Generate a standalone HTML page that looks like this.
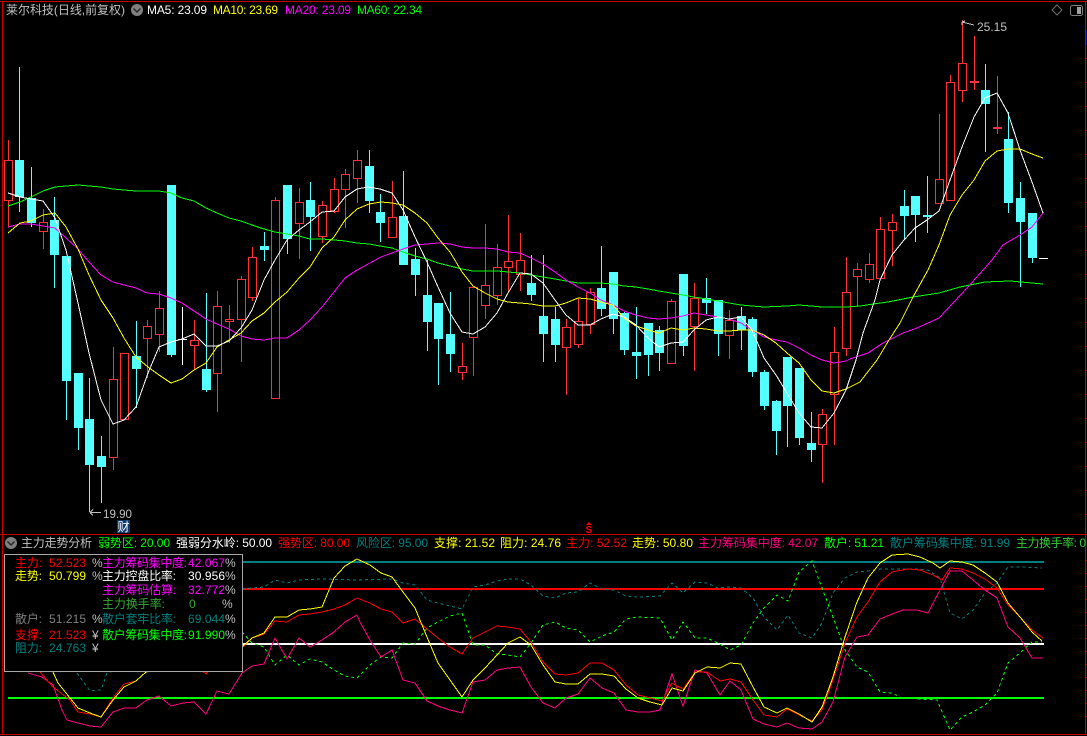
<!DOCTYPE html>
<html lang="zh">
<head>
<meta charset="utf-8">
<title>莱尔科技</title>
<style>
html,body{margin:0;padding:0;background:#000;width:1087px;height:736px;overflow:hidden}
svg{display:block;position:absolute;left:0;top:0}
text{font-family:"Liberation Sans","WenQuanYi Zen Hei","Noto Sans CJK SC",sans-serif;font-size:12px;white-space:pre}
.l{shape-rendering:crispEdges;fill:none;stroke-width:1}
</style>
</head>
<body>
<svg width="1087" height="736" viewBox="0 0 1087 736" xmlns="http://www.w3.org/2000/svg">
<rect width="1087" height="736" fill="#000"/>
<!-- frame -->
<g shape-rendering="crispEdges" fill="#c40000">
<rect x="0" y="1" width="1087" height="1"/>
<rect x="2" y="1" width="1" height="734"/>
<rect x="1085" y="1" width="1" height="734"/>
<rect x="0" y="534" width="1087" height="1"/>
<rect x="0" y="734" width="1087" height="1"/>
<rect x="1086" y="30" width="1" height="15" fill="#0000a8"/>
</g>
<path class="l" stroke="#c40000" d="M1086 58.5h1M1086 82.5h1M1086 106.5h1M1086 130.5h1M1086 154.5h1M1086 178.5h1M1086 202.5h1M1086 226.5h1M1086 250.5h1M1086 274.5h1M1086 298.5h1M1086 322.5h1M1086 346.5h1M1086 370.5h1M1086 394.5h1M1086 418.5h1M1086 442.5h1M1086 466.5h1M1086 490.5h1M1086 514.5h1M1086 560.5h1M1086 573.5h1M1086 586.5h1M1086 599.5h1M1086 612.5h1M1086 625.5h1M1086 638.5h1M1086 651.5h1M1086 664.5h1M1086 677.5h1M1086 690.5h1M1086 703.5h1M1086 716.5h1"/>

<!-- cyan wicks -->
<path class="l" stroke="#54ffff" d="M19.5 67V212M31.5 167V227M54.5 197V288M66.5 256V420M78.5 373V450M89.5 378V512M101.5 436V503M136.5 321V408M171.5 185V357M206.5 293V392M264.5 232V261M287.5 185V254M310.5 182V251M369.5 150V213M380.5 194V242M403.5 171V265M415.5 248V296M427.5 260V351M438.5 303V385M450.5 292V372M531.5 255V301M543.5 255V362M555.5 307V362M601.5 246V316M613.5 272V334M624.5 312V355M636.5 307V379M648.5 323V376M659.5 326V371M683.5 274V356M706.5 278V314M718.5 300V356M741.5 307V350M752.5 317V377M764.5 370V410M776.5 400V455M787.5 357V447M799.5 368V445M811.5 412V462M904.5 190V240M915.5 196V242M927.5 176V233M985.5 64V152M1008.5 112V213M1020.5 182V287M1032.5 213V263"/>
<!-- cyan bodies -->
<path shape-rendering="crispEdges" fill="#54ffff" d="M15 160h9v37h-9zM27 198h9v25h-9zM50 220h9v35h-9zM62 256h9v125h-9zM74 373h9v55h-9zM85 419h9v46h-9zM97 456h9v11h-9zM132 356h9v13h-9zM167 185h9v170h-9zM202 369h9v21h-9zM260 246h9v4h-9zM283 185h9v54h-9zM306 200h9v17h-9zM365 166h9v35h-9zM376 212h9v11h-9zM399 216h9v49h-9zM411 259h9v16h-9zM423 295h9v27h-9zM434 303h9v36h-9zM446 334h9v20h-9zM527 283h9v12h-9zM539 316h9v18h-9zM551 319h9v26h-9zM597 288h9v21h-9zM609 272h9v47h-9zM620 313h9v37h-9zM632 352h9v4h-9zM644 323h9v32h-9zM655 330h9v23h-9zM679 274h9v72h-9zM702 298h9v5h-9zM714 300h9v34h-9zM737 316h9v14h-9zM748 319h9v53h-9zM760 372h9v34h-9zM772 401h9v30h-9zM783 357h9v49h-9zM795 368h9v70h-9zM807 443h9v7h-9zM900 206h9v10h-9zM911 196h9v19h-9zM923 215h9v2h-9zM981 90h9v14h-9zM1004 139h9v64h-9zM1016 198h9v24h-9zM1028 213h9v45h-9z"/>
<!-- red wicks -->
<path class="l" stroke="#ff3232" d="M8.5 140V160M8.5 201V227M43.5 209V222M43.5 231V249M113.5 347V379M113.5 457V470M147.5 320V326M147.5 338V378M159.5 291V308M159.5 334V352M194.5 320V340M194.5 345V370M217.5 291V306M217.5 373V412M229.5 305V319M229.5 321V343M241.5 276V279M241.5 319V362M252.5 247V257M252.5 297V301M275.5 197V200M299.5 188V202M299.5 223V259M322.5 201V205M322.5 236V243M334.5 178V189M334.5 211V213M345.5 169V174M345.5 189V228M357.5 150V160M357.5 178V203M392.5 181V217M462.5 343V366M462.5 372V380M473.5 337V376M485.5 224V285M485.5 305V319M497.5 244V267M497.5 295V305M508.5 215V261M508.5 267V292M520.5 233V260M520.5 274V291M566.5 319V327M566.5 347V395M578.5 298V321M578.5 344V348M590.5 288V292M590.5 324V334M671.5 299V301M694.5 283V298M694.5 326V371M729.5 310V320M729.5 335V359M822.5 409V414M822.5 444V483M834.5 327V352M834.5 394V445M846.5 257V292M846.5 348V356M857.5 263V269M857.5 276V307M869.5 253V264M869.5 279V283M880.5 217V229M892.5 214V222M892.5 230V266M939.5 114V179M950.5 75V82M962.5 20V63M962.5 90V102M974.5 36V81M974.5 83V90M997.5 76V127M997.5 129V134"/>
<!-- red bodies -->
<path shape-rendering="crispEdges" fill="#ff3232" fill-rule="evenodd" d="M4 160h9v41h-9zM5 161h7v39h-7z
M39 222h9v10h-9zM40 223h7v8h-7z
M109 379h9v79h-9zM110 380h7v77h-7z
M120 353h9v67h-9zM121 354h7v65h-7z
M143 326h9v13h-9zM144 327h7v11h-7z
M155 308h9v27h-9zM156 309h7v25h-7z
M190 340h9v6h-9zM191 341h7v4h-7z
M213 306h9v68h-9zM214 307h7v66h-7z
M225 319h9v3h-9zM226 320h7v1h-7z
M237 279h9v41h-9zM238 280h7v39h-7z
M248 257h9v41h-9zM249 258h7v39h-7z
M271 200h9v199h-9zM272 201h7v197h-7z
M295 202h9v22h-9zM296 203h7v20h-7z
M318 205h9v32h-9zM319 206h7v30h-7z
M330 189h9v23h-9zM331 190h7v21h-7z
M341 174h9v16h-9zM342 175h7v14h-7z
M353 160h9v19h-9zM354 161h7v17h-7z
M388 217h9v21h-9zM389 218h7v19h-7z
M458 366h9v7h-9zM459 367h7v5h-7z
M469 287h9v51h-9zM470 288h7v49h-7z
M481 285h9v21h-9zM482 286h7v19h-7z
M493 267h9v29h-9zM494 268h7v27h-7z
M504 261h9v7h-9zM505 262h7v5h-7z
M516 260h9v15h-9zM517 261h7v13h-7z
M562 327h9v21h-9zM563 328h7v19h-7z
M574 321h9v24h-9zM575 322h7v22h-7z
M586 292h9v33h-9zM587 293h7v31h-7z
M667 301h9v63h-9zM668 302h7v61h-7z
M690 298h9v29h-9zM691 299h7v27h-7z
M725 320h9v16h-9zM726 321h7v14h-7z
M818 414h9v31h-9zM819 415h7v29h-7z
M830 352h9v43h-9zM831 353h7v41h-7z
M842 292h9v57h-9zM843 293h7v55h-7z
M853 269h9v8h-9zM854 270h7v6h-7z
M865 264h9v16h-9zM866 265h7v14h-7z
M876 229h9v50h-9zM877 230h7v48h-7z
M888 222h9v9h-9zM889 223h7v7h-7z
M935 179h9v25h-9zM936 180h7v23h-7z
M946 82h9v119h-9zM947 83h7v117h-7z
M958 63h9v28h-9zM959 64h7v26h-7z
M970 81h9v2h-9zM993 127h9v2h-9z"/>
<!-- white doji -->
<path class="l" stroke="#fff" d="M182.5 307V365M178 339.5h9M1039 258.5h9"/>

<!-- MA lines -->
<polyline class="l" stroke="#00ff00" points="8,206 20,202 31,197 43,191 55,187 66,186 78,185 89,186 101,187 113,189 124,190 136,191 147,191 159,191 171,193 182,198 194,201 206,208 217,213 229,218 241,221 252,225 264,229 275,232 287,234 299,236 310,239 322,239 334,240 345,241 357,243 369,244 380,246 392,248 403,252 415,256 427,259 438,263 450,266 462,269 473,271 497,271 508,272 520,273 531,275 543,277 555,279 566,281 578,283 600,283 613,284 624,286 636,287 648,289 659,291 671,293 683,295 694,297 706,299 718,301 729,303 741,305 752,306 764,307 787,306 799,305 811,306 822,307 846,307 860,306 873,304 888,302 913,297 939,293 960,287 985,282 1010,281 1043,284"/>
<polyline class="l" stroke="#ff00ff" points="8,227 20,224 31,224 43,226 55,228 66,238 78,249 89,262 101,275 113,282 124,285 136,288 147,293 159,294 171,298 182,303 194,311 206,319 217,324 229,329 241,336 252,339 264,340 275,338 287,338 299,330 310,320 322,307 334,292 345,278 357,270 370,263 381,257 392,253 403,249 415,245 427,244 438,243 450,244 462,247 473,248 485,248 497,249 508,252 520,253 531,258 543,264 555,272 566,280 578,287 590,293 601,300 613,305 624,311 636,315 648,318 659,319 671,318 683,316 694,313 706,315 718,317 729,319 741,323 752,330 764,337 776,340 787,342 799,348 811,355 822,360 834,363 846,361 850,359 868,353 883,343 903,333 917,328 939,318 968,287 992,260 1003,245 1020,235 1032,227 1043,213"/>
<polyline class="l" stroke="#ffff00" points="8,233 20,223 31,221 43,215 55,213 66,227 78,249 89,275 101,300 113,318 124,338 136,357 148,367 159,375 171,383 182,379 194,370 206,363 217,347 229,340 241,333 252,321 264,313 275,302 287,292 299,278 310,267 322,248 334,237 345,220 357,209 369,204 381,202 392,203 403,205 415,213 427,223 438,238 450,252 462,272 473,286 485,293 497,299 508,302 520,303 531,304 543,306 555,306 566,303 578,298 590,299 601,302 613,305 624,318 636,326 648,330 659,333 671,328 683,330 694,328 706,329 718,331 729,331 741,330 752,330 764,335 776,343 787,353 799,363 811,380 822,391 834,393 846,389 860,382 877,360 889,340 900,323 913,297 928,270 939,245 950,215 962,195 974,180 985,161 997,151 1008,149 1020,149 1032,154 1043,158"/>
<polyline class="l" stroke="#ffffff" points="8,193 20,197 31,199 43,201 55,218 66,250 78,303 89,353 101,400 113,424 124,420 136,407 148,373 159,347 171,342 182,339 194,334 206,346 217,346 229,341 241,328 252,310 264,280 275,260 287,240 299,230 310,222 322,212 334,211 345,197 357,189 368,187 380,189 392,193 403,210 415,237 427,262 438,287 450,313 462,332 473,334 485,327 497,313 508,293 520,273 531,274 543,283 555,300 566,315 578,325 590,325 601,319 613,314 624,317 636,325 648,338 659,347 671,343 683,342 694,330 706,320 718,317 729,319 741,317 752,330 764,358 776,375 787,393 799,413 811,427 822,428 834,413 846,390 856,360 863,333 875,300 880,280 892,255 904,240 915,228 927,220 939,211 950,180 962,147 974,117 985,98 997,93 1008,113 1020,150 1032,182 1043,213"/>

<!-- price labels -->
<path class="l" stroke="#c0c0c0" d="M90 512.5h11M90 512.5l3-3M90 512.5l3 3M962 22l12 3M962 22l3-1M962 22v3"/>
<text x="103" y="518" fill="#c0c0c0" textLength="29" lengthAdjust="spacingAndGlyphs">19.90</text>
<text x="977" y="31" fill="#c0c0c0" textLength="30" lengthAdjust="spacingAndGlyphs">25.15</text>
<rect x="117" y="520" width="13" height="13" fill="#0a3a6e"/>
<text x="117.5" y="531" fill="#fff" font-size="12">财</text>
<polygon points="589,522 586,525 592,525" fill="#ff0000"/>
<text x="585.5" y="533" fill="#ff0000" style="font-size:10px;font-weight:bold">S</text>

<!-- top-right icons -->
<path d="M1057 5l5 5-5 5-5-5z" fill="none" stroke="#707070"/>
<rect x="1070.5" y="5.5" width="12" height="10" rx="2" fill="none" stroke="#808080"/>
<rect x="1077" y="7" width="4" height="7" fill="#a0a0a0"/>

<!-- header -->
<text x="6" y="14" fill="#c0c0c0" textLength="119">莱尔科技(日线,前复权)</text>
<circle cx="137" cy="10" r="6" fill="#808080"/>
<path d="M133.5 8.5l3.5 3.5 3.5-3.5" fill="none" stroke="#2a2a2a" stroke-width="1.5"/>
<text x="147" y="14" fill="#ffffff" textLength="60">MA5: 23.09</text>
<text x="213" y="14" fill="#ffff00" textLength="65">MA10: 23.69</text>
<text x="285" y="14" fill="#ff00ff" textLength="66">MA20: 23.09</text>
<text x="357" y="14" fill="#00ff00" textLength="65">MA60: 22.34</text>

<!-- lower panel levels -->
<g shape-rendering="crispEdges">
<rect x="8" y="561" width="1036" height="2" fill="#008080"/>
<rect x="8" y="588" width="1036" height="2" fill="#ff0000"/>
<rect x="8" y="643" width="1036" height="2" fill="#ffffff"/>
<rect x="8" y="697" width="1036" height="2" fill="#00ff00"/>
</g>
<!-- lower panel series -->
<polyline class="l" stroke="#008080" stroke-dasharray="3 3" points="77,673 90,691 101,690 107,673 200,640 242,589 264,587 275,580 287,583 299,580 322,579 357,580 392,579 403,583 415,585 427,600 438,603 450,606 462,609 473,587 485,585 497,581 508,579 520,579 531,585 543,596 555,598 566,593 578,592 590,583 602,589 614,590 626,596 638,597 660,596 672,583 683,593 695,582 707,583 718,588 730,587 741,588 753,598 764,617 777,630 788,615 799,633 812,638 822,623 833,593 845,578 857,572 868,571 880,569 917,569 928,570 940,578 950,613 962,619 973,610 985,593 997,583 1008,567 1020,567 1042,568"/>
<polyline class="l" stroke="#00ff00" stroke-dasharray="3 3" points="242,632 252,643 264,647 275,665 287,655 299,665 310,659 322,662 334,670 345,676 357,678 370,665 381,657 392,658 403,643 415,644 427,628 438,622 450,616 462,613 473,645 485,645 497,654 508,655 520,657 531,643 543,625 555,622 566,628 578,630 590,642 602,636 614,632 626,619 638,617 660,618 672,640 683,622 695,638 707,638 718,643 730,650 741,645 753,623 764,608 777,595 788,601 799,572 812,561 822,588 833,617 845,650 857,667 868,672 880,692 892,693 902,698 937,700 950,730 962,717 973,712 985,705 997,693 1008,663 1020,653 1032,642 1042,642"/>
<polyline class="l" stroke="#ff0080" points="28,673 42,677 53,685 62,710 67,720 78,723 90,726 101,727 113,712 124,708 136,708 147,700 159,696 171,706 183,703 194,702 206,714 217,691 229,694 242,673 252,666 264,664 275,638 287,659 299,638 310,647 322,640 334,632 345,622 357,615 360,622 370,640 381,657 392,650 403,680 415,683 427,701 438,706 450,710 462,713 473,682 485,680 497,670 508,668 520,667 531,687 543,703 555,708 566,698 578,694 590,678 602,688 614,693 626,710 638,712 650,712 660,710 672,674 683,706 695,670 707,673 720,695 730,681 741,690 753,719 764,724 777,727 787,723 799,728 812,729 822,722 833,702 845,657 857,637 868,635 880,619 892,614 903,610 917,610 928,613 940,590 950,571 962,571 973,580 985,590 997,598 1008,627 1020,638 1032,658 1043,658"/>
<polyline class="l" stroke="#ff0000" points="40,672 53,687 70,700 78,712 90,714 101,717 113,698 124,684 136,681 146,672 195,665 206,674 217,660 242,648 252,638 264,634 275,621 287,622 299,615 310,614 322,612 334,609 345,605 357,598 370,603 381,609 392,612 403,623 415,619 427,629 438,638 450,647 462,654 473,638 485,632 497,626 508,627 520,629 531,642 543,662 555,674 566,675 578,673 590,663 602,663 614,670 626,685 638,695 650,698 662,701 672,683 683,689 695,672 707,672 720,681 730,679 741,682 753,700 764,715 777,717 787,709 799,715 812,721 822,710 833,680 845,643 857,617 868,602 880,582 892,572 908,569 920,570 933,575 942,580 950,568 962,569 973,573 985,579 997,588 1008,605 1020,617 1032,630 1043,638"/>
<polyline class="l" stroke="#ffff00" points="53,672 58,683 70,698 78,708 90,713 101,717 113,700 124,687 136,681 146,672 242,647 252,638 264,633 275,617 287,617 299,610 310,609 322,607 334,578 345,566 357,559 370,565 381,573 392,577 403,592 415,608 427,637 438,663 450,680 462,697 473,680 485,668 497,655 508,643 520,637 531,645 543,665 555,682 566,684 578,684 590,674 602,674 614,676 626,689 638,698 650,702 662,705 672,688 683,691 695,673 707,667 720,668 730,663 741,664 753,687 764,707 777,713 787,708 799,714 812,722 822,707 833,677 845,637 857,602 868,578 880,563 892,555 908,554 920,557 933,563 940,568 950,561 962,562 973,565 985,573 997,582 1008,603 1020,617 1032,632 1042,641"/>

<!-- lower header -->
<circle cx="11" cy="543" r="6" fill="#808080"/>
<path d="M7.5 541.5l3.5 3.5 3.5-3.5" fill="none" stroke="#2a2a2a" stroke-width="1.5"/>
<text x="21" y="547" fill="#c0c0c0" textLength="71">主力走势分析</text>
<text x="98" y="547" fill="#00ff00" textLength="72">弱势区: 20.00</text>
<text x="176" y="547" fill="#ffffff" textLength="96">强弱分水岭: 50.00</text>
<text x="278" y="547" fill="#ff0000" textLength="72">强势区: 80.00</text>
<text x="356" y="547" fill="#008080" textLength="72">风险区: 95.00</text>
<text x="434" y="547" fill="#ffff00" textLength="61">支撑: 21.52</text>
<text x="500" y="547" fill="#ffff00" textLength="61">阻力: 24.76</text>
<text x="566" y="547" fill="#ff0000" textLength="61">主力: 52.52</text>
<text x="632" y="547" fill="#ffff00" textLength="61">走势: 50.80</text>
<text x="698" y="547" fill="#ff0080" textLength="120">主力筹码集中度: 42.07</text>
<text x="824" y="547" fill="#00ff00" textLength="60">散户: 51.21</text>
<text x="890" y="547" fill="#008080" textLength="120">散户筹码集中度: 91.99</text>
<text x="1016" y="547" fill="#33cc33" textLength="70">主力换手率: 0</text>

<!-- legend box -->
<rect x="4.5" y="554.5" width="238" height="117" fill="#000" stroke="#a8a8a8" shape-rendering="crispEdges"/>
<g>
<text x="15" y="567" fill="#ff0000" textLength="27">主力:</text>
<text x="49" y="567" fill="#ff0000" textLength="37">52.523</text>
<text x="92" y="567" fill="#c0c0c0" textLength="9">%</text>
<text x="102" y="567" fill="#ff00ff" textLength="85">主力筹码集中度:</text>
<text x="188" y="567" fill="#ff00ff" textLength="37">42.067</text>
<text x="225" y="567" fill="#c0c0c0" textLength="9">%</text>

<text x="15" y="580" fill="#ffff00" textLength="27">走势:</text>
<text x="49" y="580" fill="#ffff00" textLength="37">50.799</text>
<text x="92" y="580" fill="#c0c0c0" textLength="9">%</text>
<text x="102" y="580" fill="#ffffff" textLength="74">主力控盘比率:</text>
<text x="188" y="580" fill="#ffffff" textLength="37">30.956</text>
<text x="225" y="580" fill="#c0c0c0" textLength="9">%</text>

<text x="102" y="594" fill="#ff00ff" textLength="74">主力筹码估算:</text>
<text x="188" y="594" fill="#ff00ff" textLength="37">32.772</text>
<text x="225" y="594" fill="#c0c0c0" textLength="9">%</text>

<text x="102" y="608" fill="#33aa33" textLength="63">主力换手率:</text>
<text x="189" y="608" fill="#33aa33">0</text>
<text x="222" y="608" fill="#c0c0c0" textLength="9">%</text>

<text x="15" y="623" fill="#808080" textLength="27">散户:</text>
<text x="49" y="623" fill="#808080" textLength="37">51.215</text>
<text x="92" y="623" fill="#c0c0c0" textLength="9">%</text>
<text x="102" y="623" fill="#008080" textLength="74">散户套牢比率:</text>
<text x="188" y="623" fill="#008080" textLength="37">69.044</text>
<text x="225" y="623" fill="#c0c0c0" textLength="9">%</text>

<text x="15" y="639" fill="#ff0000" textLength="27">支撑:</text>
<text x="49" y="639" fill="#ff0000" textLength="37">21.523</text>
<text x="92" y="639" fill="#c0c0c0" textLength="9">¥</text>
<text x="102" y="639" fill="#00ff00" textLength="85">散户筹码集中度:</text>
<text x="188" y="639" fill="#00ff00" textLength="37">91.990</text>
<text x="225" y="639" fill="#c0c0c0" textLength="9">%</text>

<text x="15" y="652" fill="#008080" textLength="27">阻力:</text>
<text x="49" y="652" fill="#008080" textLength="37">24.763</text>
<text x="92" y="652" fill="#c0c0c0" textLength="9">¥</text>
</g>
</svg>
</body>
</html>
